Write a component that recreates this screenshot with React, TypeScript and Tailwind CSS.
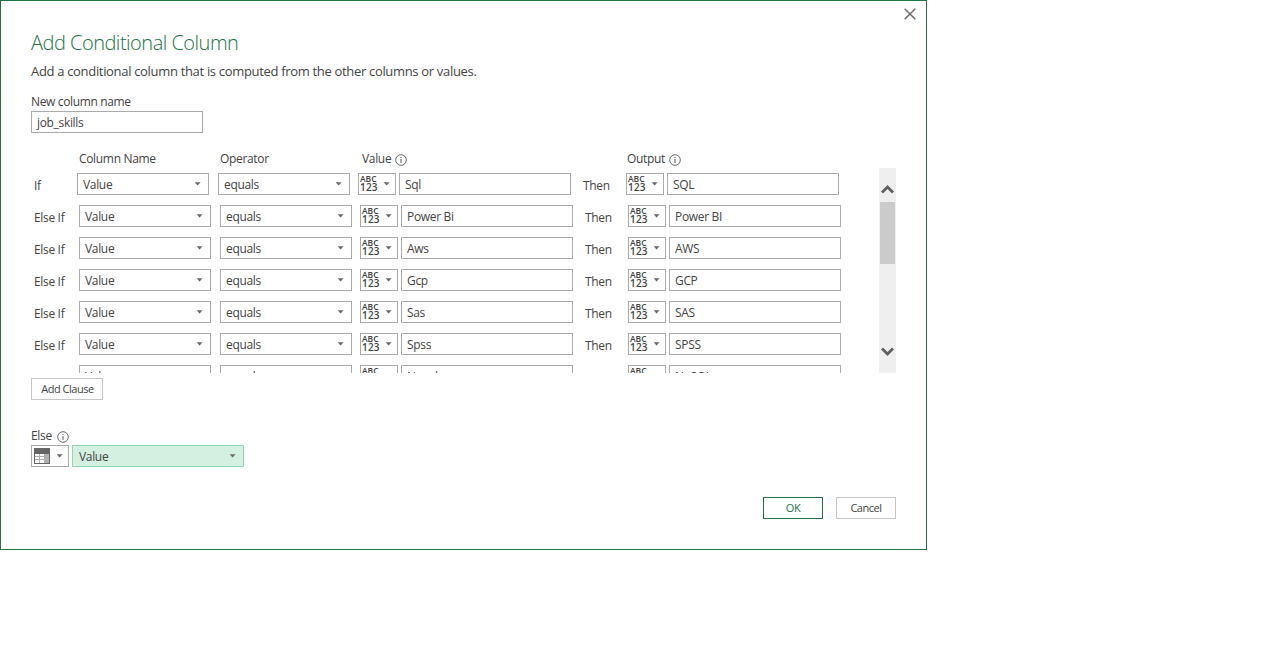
type Clause = { value: string; output: string };

const clauses: Clause[] = [
  { value: "Sql", output: "SQL" },
  { value: "Power Bi", output: "Power BI" },
  { value: "Aws", output: "AWS" },
  { value: "Gcp", output: "GCP" },
  { value: "Sas", output: "SAS" },
  { value: "Spss", output: "SPSS" },
  { value: "Nosql", output: "NoSQL" },
];

function Caret() {
  return (
    <svg width="7" height="4" viewBox="0 0 7 4" className="block shrink-0" fill="#6a6a6a">
      <path d="M0.6 0.2h6L3.6 3.6z" />
    </svg>
  );
}

function Info() {
  return (
    <svg width="12" height="12" viewBox="0 0 12 12" className="relative top-[0.5px] shrink-0" fill="none" stroke="#5a5a5a">
      <circle cx="6" cy="6" r="5.3" strokeWidth="0.9" />
      <path d="M6 5v4M6 3v1.1" strokeWidth="1" />
    </svg>
  );
}

function Select({ label }: { label: string }) {
  return (
    <button className="flex h-[22px] w-[132px] shrink-0 items-center justify-between border border-[#ababab] bg-white pr-[7px] pl-[5px]">
      <span className="pt-px">{label}</span>
      <span><Caret /></span>
    </button>
  );
}

function TypePicker() {
  return (
    <button className="flex h-[22px] w-[38px] shrink-0 items-center justify-between border border-[#ababab] bg-white pr-[5px] pl-[1px]">
      <span className="flex flex-col pb-px text-left font-semibold text-[#444]">
        <span className="h-[8px] text-[8.5px] leading-[8px] tracking-[0px]">ABC</span>
        <span className="h-[9px] text-[10px] leading-[9px] tracking-[0.2px]">123</span>
      </span>
      <span><Caret /></span>
    </button>
  );
}

function Field({ text }: { text: string }) {
  return (
    <div className="flex h-[22px] w-[172px] shrink-0 items-center border border-[#ababab] bg-white pt-px pl-[5px]">
      {text}
    </div>
  );
}

function Row({ clause, first }: { clause: Clause; first: boolean }) {
  return (
    <div className="group flex h-8 shrink-0 items-start">
      <span className={first ? "w-[46px] shrink-0 pt-1 pl-[3px]" : "w-12 shrink-0 pt-1 pl-[3px] group-last:pt-[6px]"}>
        {first ? "If" : "Else If"}
      </span>
      <Select label="Value" />
      <div className="w-[9px] shrink-0" />
      <Select label="equals" />
      <div className="w-2 shrink-0" />
      <TypePicker />
      <div className="w-[3px] shrink-0" />
      <Field text={clause.value} />
      <span className="w-[55px] shrink-0 pt-1 pl-[12px] group-last:pt-[6px]">Then</span>
      <TypePicker />
      <div className="w-[3px] shrink-0" />
      <Field text={clause.output} />
    </div>
  );
}

export default function App() {
  return (
    <div className="h-[648px] w-[1285px] overflow-hidden bg-white font-['Open_Sans',sans-serif] text-[12px] leading-[18px] tracking-[-0.33px] text-[#444]">
      <div className="flex h-[550px] w-[927px] flex-col border border-[#217346] pr-[30px] pl-[30px]">
        <div className="-mr-[20px] flex h-[28px] justify-end pt-[7px]">
          <svg width="12" height="12" viewBox="0 0 12 12" stroke="#666" strokeWidth="1.4">
            <path d="M0.7 0.7l10.6 10.6M11.3 0.7L0.7 11.3" />
          </svg>
        </div>
        <h1 className="h-[32px] pt-px text-[20px] leading-[25px] font-light tracking-[-0.5px] text-[#217346]">Add Conditional Column</h1>
        <p className="h-[31px] text-[13px] leading-[20px] tracking-[-0.32px]">
          Add a conditional column that is computed from the other columns or values.
        </p>
        <label className="h-[19px] leading-[20px] tracking-[-0.36px]">New column name</label>
        <Field text="job_skills" />
        <div className="flex h-[35px] shrink-0 pt-[17px]">
          <span className="w-[141px] shrink-0 pl-[48px] whitespace-nowrap">Column Name</span>
          <span className="w-[141px] shrink-0 pl-[48px]">Operator</span>
          <span className="flex w-[265px] shrink-0 items-center gap-[4px] pl-[49px]">Value <Info /></span>
          <span className="flex items-center gap-[4px] pl-[49px]">Output <Info /></span>
        </div>
        <div className="flex h-[205px] shrink-0 justify-between overflow-hidden">
          <div className="flex flex-col pt-[5px]">
            {clauses.map((c, i) => (
              <Row key={c.value} clause={c} first={i === 0} />
            ))}
          </div>
          <div className="flex w-[17px] flex-col items-center bg-[#efefef] pt-[16px]">
            <svg width="13" height="10" viewBox="0 0 13 10" fill="none" stroke="#606060" strokeWidth="2.8" className="shrink-0">
              <path d="M1 8.5L6.5 3L12 8.5" />
            </svg>
            <div className="mt-[8px] h-[62px] w-[15px] shrink-0 bg-[#cbcbcb]" />
            <svg width="13" height="10" viewBox="0 0 13 10" fill="none" stroke="#606060" strokeWidth="2.8" className="mt-[83px] shrink-0">
              <path d="M1 1.5L6.5 7L12 1.5" />
            </svg>
          </div>
        </div>
        <button className="mt-[5px] flex h-[22px] w-[72px] shrink-0 items-center justify-center border border-[#c6c6c6] pl-px text-[11px] tracking-[-0.48px]">
          Add Clause
        </button>
        <div className="mt-[27px] flex h-[18px] items-center gap-[5px]">
          Else <Info />
        </div>
        <div className="flex gap-[3px]">
          <button className="flex h-[22px] w-[38px] items-center justify-between border border-[#ababab] pr-[5px] pl-[2px]">
            <svg width="16" height="16" viewBox="0 0 16 16" shapeRendering="crispEdges">
              <path fill="#666" d="M0 0h16v16H0z" />
              <path fill="#fff" d="M1 6h4v2H1zM6 6h4v2H6zM1 9h4v2H1zM6 9h4v2H6zM1 12h4v3H1zM6 12h4v3H6z" />
              <path fill="#b1b1b1" d="M11 6h4v9h-4zM5 6h1v9H5zM1 8h9v1H1zM1 11h9v1H1zM10 6h1v9h-1z" />
            </svg>
            <span><Caret /></span>
          </button>
          <button className="flex h-[22px] w-[172px] items-center justify-between border border-[#9bd4b5] bg-[#d3f0e0] pr-[7px] pl-[6px]">
            <span className="pt-px">Value</span>
            <span><Caret /></span>
          </button>
        </div>
        <div className="mt-[30px] flex justify-end gap-[13px] text-[11px]">
          <button className="h-[22px] w-[60px] border border-[#217346] tracking-[-0.5px] text-[#217346]">OK</button>
          <button className="h-[22px] w-[60px] border border-[#c6c6c6] tracking-[-0.48px]">Cancel</button>
        </div>
      </div>
    </div>
  );
}
